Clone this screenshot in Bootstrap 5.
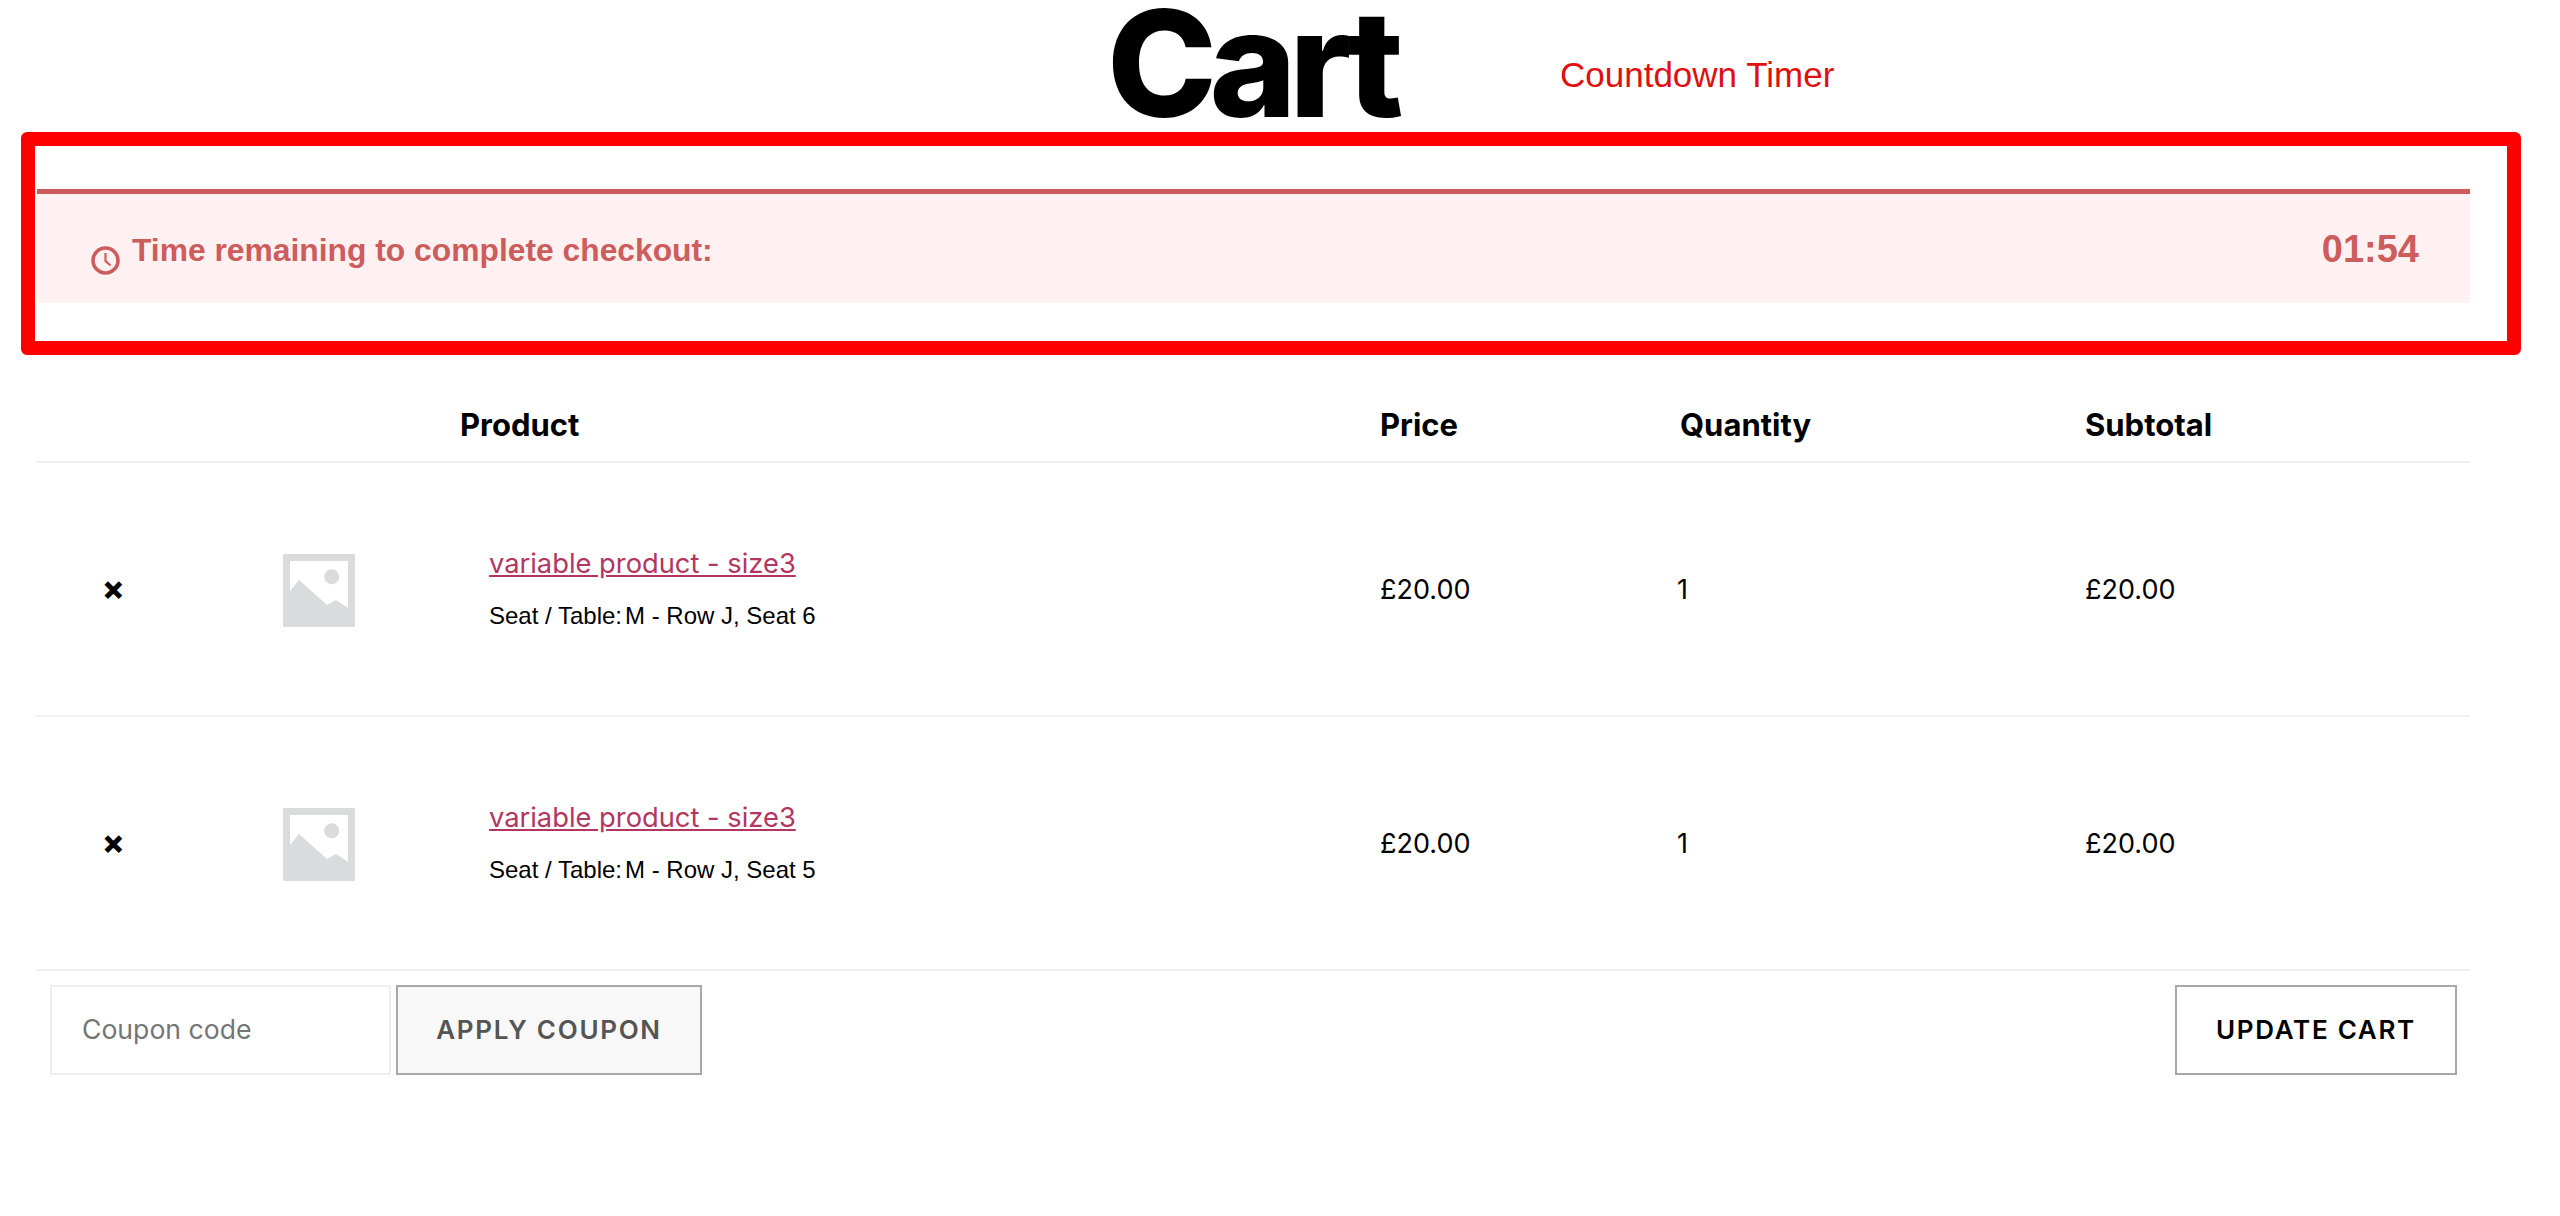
<!DOCTYPE html>
<html lang="en">
<head>
  <meta charset="UTF-8">
  <title>Cart</title>
  <link href="https://cdn.jsdelivr.net/npm/bootstrap@5.3.3/dist/css/bootstrap.min.css" rel="stylesheet">
  <style>
    body { font-family: "Inter", "Liberation Sans", sans-serif; color: #000; background: #fff; }
    .cart-head { height: 132px; padding-left: 1107px; }
    .cart-title { font-family: "Inter", sans-serif; font-weight: 800; font-size: 148px; line-height: 128px; letter-spacing: -7.5px; margin: 0; width: 453px; }
    .timer-label { font-family: "Liberation Sans", sans-serif; font-size: 35px; color: #e01010; padding-top: 55px; line-height: 40px; }
    .red-frame { margin: 0 39px 0 21px; border: 14px solid #f00; border-radius: 6px; padding: 43px 37px 38px 2px; }
    .time-notice { height: 114px; border-top: 5px solid #cd5c5c; background: #fff1f1; color: #cd5c5c; font-family: "Liberation Sans", sans-serif; font-weight: 700; padding: 0 51px 0 54px; }
    .time-msg { font-size: 31.8px; line-height: 38px; margin-top: 9px; }
    .time-msg svg { margin-top: 15px; margin-right: 12px; }
    .time-left { font-size: 38px; line-height: 44px; margin-top: 1px; }
    .cart-wrap { margin: 0 90px 0 36px; }
    .cart-table { table-layout: fixed; width: 2434px; margin: 0; }
    .cart-table th, .cart-table td { border: 0; border-bottom: 2px solid #f0f0f0; padding: 0; vertical-align: middle; }
    .cart-table th { height: 107px; font-size: 31px; font-weight: 700; vertical-align: top; padding-top: 52px; line-height: 36px; }
    .cart-table th.qty-head { padding-left: 3px; }
    .cart-table td { height: 254px; font-size: 27px; padding-top: 2px; }
    .w-rem { width: 200px; }
    .w-thumb { width: 224px; }
    .w-name { width: 920px; }
    .w-price { width: 297px; }
    .w-qty { width: 408px; }
    .cart-table td.rem-x { font-size: 33px; font-weight: 800; line-height: 40px; padding-left: 66px; padding-top: 0; padding-bottom: 2px; }
    .cart-table td.thumb-cell { padding-left: 47px; padding-top: 2px; }
    .thumb-pic { display: block; }
    .cart-table td.name-cell { padding-left: 29px; padding-top: 0; }
    .prod-link { color: #b2365f; font-size: 27.3px; line-height: 36px; display: block; margin-bottom: 19px; margin-top: -1px; }
    .seat-info { font-family: "Liberation Sans", sans-serif; font-size: 24px; line-height: 30px; }
    .seat-info b { font-weight: 400; margin-right: 3px; }
    .coupon-row { padding: 14px 13px 0 14px; }
    .coupon-input { width: 341px; height: 90px; border: 2px solid #eee; border-radius: 0; padding: 0 30px 2px; font-size: 26.6px; color: #757575; margin-right: 5px; }
    .coupon-input::placeholder { color: #757575; }
    .btn-cart { height: 90px; border: 2px solid #a8a8a8; border-radius: 0; font-size: 26px; font-weight: 600; letter-spacing: 1.7px; text-transform: uppercase; background: #fff; color: #000; padding: 0 0 2px; }
    .btn-apply { width: 306px; background: #f8f8f8; color: #555; }
    .btn-update { width: 282px; }
  </style>
</head>
<body>
  <div class="cart-head d-flex">
    <h1 class="cart-title">Cart</h1>
    <div class="timer-label">Countdown Timer</div>
  </div>

  <!-- timer -->
  <div class="red-frame">
    <div class="time-notice d-flex justify-content-between align-items-center">
      <div class="time-msg d-flex">
        <svg width="29" height="29" viewBox="0 0 29 29" fill="none" stroke="#cd5c5c"><circle cx="14.5" cy="14.5" r="12.5" stroke-width="3.6"/><path d="M14.5 7V15L19.5 19.5" stroke-width="2.2"/></svg>
        <span>Time remaining to complete checkout:</span>
      </div>
      <div class="time-left">01:54</div>
    </div>
  </div>

  <!-- cart table -->
  <div class="cart-wrap">
    <table class="cart-table">
      <colgroup>
        <col class="w-rem"><col class="w-thumb"><col class="w-name"><col class="w-price"><col class="w-qty"><col>
      </colgroup>
      <thead>
        <tr><th></th><th></th><th>Product</th><th>Price</th><th class="qty-head">Quantity</th><th>Subtotal</th></tr>
      </thead>
      <tbody>
        <tr>
          <td class="rem-x">×</td>
          <td class="thumb-cell">
            <svg class="thumb-pic" width="72" height="73" viewBox="0 0 72 73"><rect width="72" height="73" rx="1" fill="#d9dbdc"/><path d="M7 7H65V54L53 46L44 51L16 26L7 37Z" fill="#fff"/><circle cx="48.7" cy="22.7" r="7.5" fill="#d9dbdc"/></svg>
          </td>
          <td class="name-cell">
            <a href="#" class="prod-link">variable product - size3</a>
            <div class="seat-info"><b>Seat / Table:</b>M - Row J, Seat 6</div>
          </td>
          <td>£20.00</td>
          <td>1</td>
          <td>£20.00</td>
        </tr>
        <tr>
          <td class="rem-x">×</td>
          <td class="thumb-cell">
            <svg class="thumb-pic" width="72" height="73" viewBox="0 0 72 73"><rect width="72" height="73" rx="1" fill="#d9dbdc"/><path d="M7 7H65V54L53 46L44 51L16 26L7 37Z" fill="#fff"/><circle cx="48.7" cy="22.7" r="7.5" fill="#d9dbdc"/></svg>
          </td>
          <td class="name-cell">
            <a href="#" class="prod-link">variable product - size3</a>
            <div class="seat-info"><b>Seat / Table:</b>M - Row J, Seat 5</div>
          </td>
          <td>£20.00</td>
          <td>1</td>
          <td>£20.00</td>
        </tr>
      </tbody>
    </table>
    <div class="coupon-row d-flex justify-content-between">
      <div class="d-flex">
        <input type="text" class="coupon-input" placeholder="Coupon code">
        <button type="button" class="btn btn-cart btn-apply">Apply coupon</button>
      </div>
      <button type="button" class="btn btn-cart btn-update">Update cart</button>
    </div>
  </div>
</body>
</html>
